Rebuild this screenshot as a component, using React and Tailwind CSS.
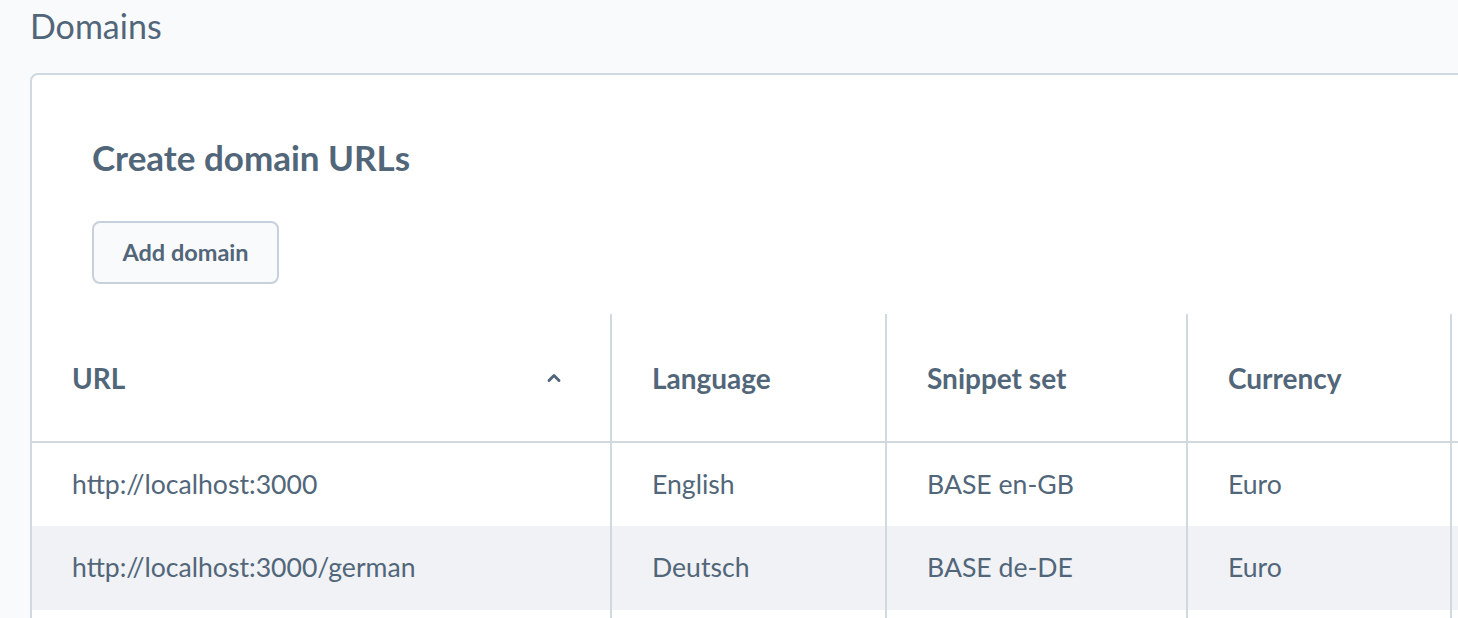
import { ChevronUp } from 'lucide-react';

const rows = [
  { url: 'http://localhost:3000', language: 'English', snippet: 'BASE en-GB', currency: 'Euro' },
  { url: 'http://localhost:3000/german', language: 'Deutsch', snippet: 'BASE de-DE', currency: 'Euro' },
];

function App() {
  return (
    <div
      className="h-[618px] w-full overflow-hidden bg-[#f9fafb] text-[#52667a]"
      style={{ fontFamily: 'Lato, "Open Sans", sans-serif' }}
    >
      {/* Page title */}
      <h1 className="pl-[30px] pt-[4px] text-[34px] leading-[44px] font-normal">Domains</h1>

      {/* Card */}
      <div className="ml-[30px] mt-[25px] w-[1500px] rounded-l-[8px] border-2 border-[#d1d9e0] bg-white">
        <div className="px-[60px] pt-[62px] pb-[30px]">
          <h2 className="text-[35px] leading-[40px] font-bold">Create domain URLs</h2>
          <button className="mt-[44px] flex h-[63px] w-[187px] items-center justify-center rounded-[8px] border-2 border-[#c8d1db] bg-[#f9fafb] text-[23.5px] font-bold">
            Add domain
          </button>
        </div>

        {/* Table */}
        <table className="w-full table-fixed border-collapse text-[26.6px]">
          <colgroup>
            <col className="w-[579px]" />
            <col className="w-[275px]" />
            <col className="w-[301px]" />
            <col className="w-[264px]" />
            <col />
          </colgroup>
          <thead>
            <tr className="h-[128px] border-b-2 border-[#d1d9e0] text-left text-[28px]">
              <th className="border-r-2 border-[#d1d9e0] pl-[40px] pr-[46px] font-bold">
                <div className="flex items-center justify-between">
                  <span>URL</span>
                  <ChevronUp size={20} strokeWidth={3.5} />
                </div>
              </th>
              <th className="border-r-2 border-[#d1d9e0] pl-[40px] font-bold">Language</th>
              <th className="border-r-2 border-[#d1d9e0] pl-[40px] font-bold">Snippet set</th>
              <th className="border-r-2 border-[#d1d9e0] pl-[40px] font-bold">Currency</th>
              <th></th>
            </tr>
          </thead>
          <tbody>
            {rows.map((r, i) => (
              <tr key={i} className={`h-[84px] ${i % 2 === 1 ? 'bg-[#f0f2f5]' : 'bg-white'}`}>
                <td className="border-r-2 border-[#d1d9e0] pl-[40px]">{r.url}</td>
                <td className="border-r-2 border-[#d1d9e0] pl-[40px]">{r.language}</td>
                <td className="border-r-2 border-[#d1d9e0] pl-[40px]">{r.snippet}</td>
                <td className="border-r-2 border-[#d1d9e0] pl-[40px]">{r.currency}</td>
                <td></td>
              </tr>
            ))}
            <tr className="h-[84px]">
              <td className="border-r-2 border-[#d1d9e0]"></td>
              <td className="border-r-2 border-[#d1d9e0]"></td>
              <td className="border-r-2 border-[#d1d9e0]"></td>
              <td className="border-r-2 border-[#d1d9e0]"></td>
              <td></td>
            </tr>
          </tbody>
        </table>
      </div>
    </div>
  );
}

export default App;
